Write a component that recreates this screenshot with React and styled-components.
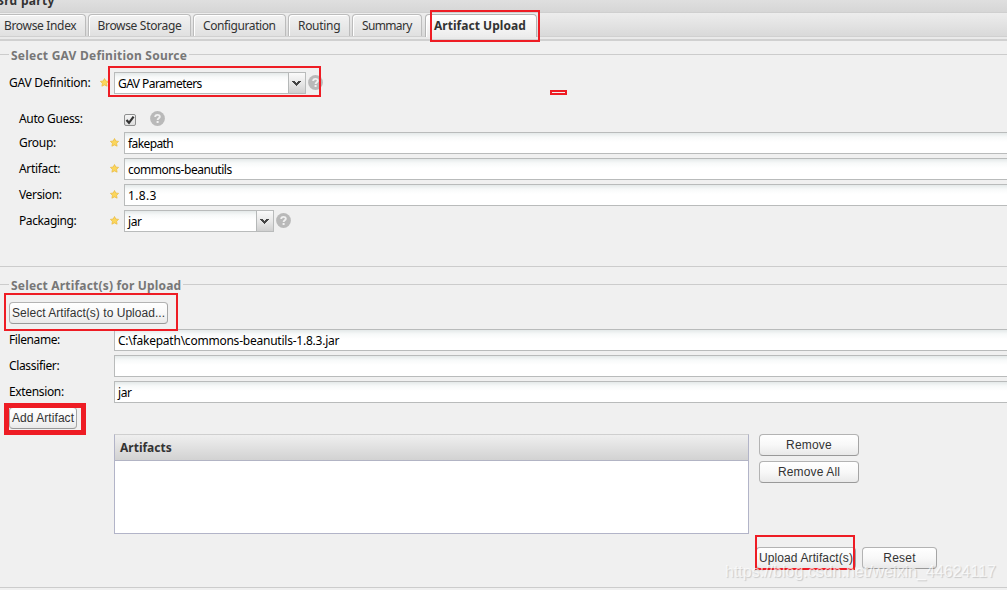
import styled, { createGlobalStyle } from 'styled-components'


const GlobalStyle = createGlobalStyle`
    * {
        box-sizing: border-box;
    }
    body {
        margin: 0;
        background: #f0f0f0;
        overflow: hidden;
    }
`

const Page = styled.div`
    position: relative;
    width: 1007px;
    height: 590px;
    overflow: hidden;
    background: #f0f0f0;
    font-family: "Noto Sans", "DejaVu Sans", sans-serif;
    font-size: 12px;
    color: #000;
    white-space: nowrap;
`

const Spaced = styled.span`
    letter-spacing: ${props => props.$ls || 0}px;
`

const TitleBar = styled.div`
    height: 13px;
    border-bottom: 1px solid #cfcfcf;
    background: linear-gradient(#dfdfdf, #d6d6d6);
    font-weight: bold;
    line-height: 14px;
    color: #333;
    overflow: hidden;
`
const TitleText = styled.div`
    margin: -6px 0 0 -3px;
`

const TabStrip = styled.div`
    display: flex;
    height: 24px;
    padding-top: 1px;
    border-bottom: 1px solid #d0d0d0;
    background: linear-gradient(#ededed, #d9d9d9);
`
const Tab = styled.div`
    flex: none;
    width: ${props => props.$w}px;
    height: ${props => props.$active ? 23 : 22}px;
    margin-left: ${props => props.$gap}px;
    padding-left: ${props => props.$pad}px;
    border: 1px solid ${props => props.$active ? '#b5b5b5' : '#bcbcbc'};
    border-bottom: 0;
    border-radius: 4px 4px 0 0;
    box-shadow: inset 1px 1px 0 #fff;
    background: ${props => props.$active
        ? 'linear-gradient(#ffffff, #ececec)'
        : 'linear-gradient(#f2f2f2, #e0e0e0)'};
    color: #333;
    font-weight: ${props => props.$active ? 'bold' : 'normal'};
    line-height: 22px;
`
const TabSpacer = styled.div`
    height: 4px;
    border-bottom: 2px solid #d0d0d0;
    background: #eaeaea;
`

const Section = styled.section`
    height: ${props => props.$h}px;
    padding-top: ${props => props.$pt}px;
    border-bottom: 1px solid #ccc;
`
const Legend = styled.div`
    display: flex;
    align-items: center;
    height: 16px;
    color: #777;
    font-weight: bold;
    &::before, &::after {
        content: '';
        height: 1px;
        background: #ccc;
        margin-top: -2px;
    }
    &::before {
        width: 9px;
        margin-right: 2px;
    }
    &::after {
        flex: 1;
        margin-left: 2px;
    }
`

const Row = styled.div`
    display: flex;
    height: 22px;
    margin-top: ${props => props.$top}px;
    padding-left: ${props => props.$indent}px;
`
const Label = styled.label`
    width: ${props => props.$w}px;
    flex: none;
    line-height: 21px;
`
const StarSlot = styled.span`
    width: 14px;
    flex: none;
    padding-top: 6px;
    line-height: 0;
`
const Field = styled.div`
    flex: 1;
    height: 22px;
    padding-left: 3px;
    border: 1px solid #b9bbbb;
    border-right: 0;
    background: linear-gradient(#e4e9e9, #f7f9f9 4px, #fff 9px);
    line-height: 21px;
`
const Combo = styled.div`
    display: flex;
    justify-content: space-between;
    width: ${props => props.$w}px;
    height: 22px;
    padding-left: 3px;
    border: 1px solid #b9bbbb;
    background: linear-gradient(#e4e9e9, #f7f9f9 4px, #fff 9px);
    line-height: 21px;
`
const Trigger = styled.span`
    display: flex;
    align-items: center;
    justify-content: center;
    width: 17px;
    padding-right: 1px;
    border-left: 1px solid #b5b8b8;
    background: linear-gradient(#fafafa, #e8e8e8 50%, #cfcfcf);
`
const Checkbox = styled.span`
    width: 12px;
    height: 12px;
    margin: 6px 15px 0 0;
    border: 1px solid #8e8f8f;
    border-radius: 2px;
    background: linear-gradient(#f5f5f5, #dedede);
    line-height: 0;
`
const HelpDot = styled.span`
    width: 15px;
    height: 15px;
    margin: ${props => props.$m};
    line-height: 0;
`

const Button = styled.button`
    display: flex;
    align-items: center;
    justify-content: center;
    flex: none;
    width: ${props => props.$w}px;
    height: 22px;
    margin: 0;
    padding: 0 0 1px;
    border: 1px solid #b3b3b3;
    border-bottom-color: #999;
    border-right-color: #a5a5a5;
    border-radius: 4px;
    background: linear-gradient(#ffffff, #f8f8f8 50%, #e9e9e9);
    color: #333;
    font: 12px "Liberation Sans", Arial, sans-serif;
    white-space: nowrap;
`
const ButtonRow = styled.div`
    display: flex;
    gap: 6px;
    margin-top: ${props => props.$top}px;
    padding-left: ${props => props.$indent}px;
`

const ListArea = styled.div`
    display: flex;
    gap: 10px;
    margin-top: 5px;
    padding-left: 114px;
`
const Grid = styled.div`
    width: 635px;
    height: 100px;
    border: 1px solid #b2b4c8;
    border-top-color: #cfcfcf;
    background: #fff;
`
const GridHeader = styled.div`
    height: 26px;
    padding-left: 5px;
    border-bottom: 1px solid #b2b4c4;
    background: linear-gradient(#efefef, #d2d2d2);
    color: #333;
    font-weight: bold;
    line-height: 25px;
`
const ButtonColumn = styled.div`
    display: flex;
    flex-direction: column;
    gap: 5px;
`

// red marker drawn over the form
const Marker = styled.div`
    position: absolute;
    left: ${props => props.$x}px;
    top: ${props => props.$y}px;
    width: ${props => props.$w}px;
    height: ${props => props.$h}px;
    border: ${props => props.$b || 2}px solid #ee1c24;
`
const Watermark = styled.div`
    position: absolute;
    left: 725px;
    top: 562px;
    color: rgba(255, 255, 255, 0.7);
    font: 16px/20px "Liberation Sans", Arial, sans-serif;
    text-shadow: 1px 1px 1px rgba(0, 0, 0, 0.16);
`

const Star = () => (
    <svg width="9" height="9" viewBox="0 0 9 9">
        <path d="M4.5 0.5L5.8 3L8.6 3.4L6.6 5.3L7.1 8.2L4.5 6.9L1.9 8.2L2.4 5.3L0.4 3.4L3.2 3Z" fill="#fbd65c" stroke="#e9b93c" strokeWidth="0.7" />
    </svg>
)

const Arrow = () => (
    <svg width="9" height="5" viewBox="0 0 9 5" shapeRendering="crispEdges">
        <path d="M0 0h3v1h1v1h1v-1h1v-1h3v1h-1v1h-1v1h-1v1h-1v1h-1v-1h-1v-1h-1v-1h-1v-1h-1z" fill="#444" />
    </svg>
)

const Help = ({ m }) => (
    <HelpDot $m={m}>
        <svg width="15" height="15" viewBox="0 0 15 15">
            <circle cx="7.5" cy="7.5" r="7.4" fill="#b9b9b9" />
            <path d="M5.2 6C5.2 3.2 9.8 3.2 9.8 5.8C9.8 7.3 7.6 7.2 7.6 9" fill="none" stroke="#f0f0f0" strokeWidth="1.9" />
            <rect x="6.6" y="10" width="2" height="2" fill="#f0f0f0" />
        </svg>
    </HelpDot>
)

const Check = () => (
    <svg width="10" height="10" viewBox="0 0 10 10">
        <path d="M1.5 5L4 7.8L8.6 1.6" fill="none" stroke="#333" strokeWidth="2.2" />
    </svg>
)

const tabs = [
    { text: 'Browse Index', w: 91, gap: -5, pad: 8, ls: -0.33 },
    { text: 'Browse Storage', w: 103, gap: 2, pad: 8.5, ls: -0.32 },
    { text: 'Configuration', w: 93, gap: 2, pad: 9, ls: -0.4 },
    { text: 'Routing', w: 62, gap: 2, pad: 9, ls: -0.3 },
    { text: 'Summary', w: 70, gap: 2, pad: 9, ls: -0.65 },
    { text: 'Artifact Upload', w: 112, gap: 3, pad: 8, ls: 0.03, active: true },
]

const gavFields = [
    { label: 'Group:', value: 'fakepath', top: 2, ls: -0.3, vls: -0.6 },
    { label: 'Artifact:', value: 'commons-beanutils', top: 4, ls: -0.33, vls: -0.47 },
    { label: 'Version:', value: '1.8.3', top: 4, ls: -0.35, vls: 0.35 },
]

const fileFields = [
    { label: 'Filename:', value: 'C:\\fakepath\\commons-beanutils-1.8.3.jar', top: 5, ls: -0.4, vls: -0.23 },
    { label: 'Classifier:', value: '', top: 4, ls: -0.35, vls: 0 },
    { label: 'Extension:', value: 'jar', top: 4, ls: -0.35, vls: -0.4 },
]

const App = () => {
    return (
        <Page>
            <GlobalStyle />
            <TitleBar>
                <TitleText><Spaced $ls={0.3}>3rd party</Spaced></TitleText>
            </TitleBar>
            <TabStrip>
                {tabs.map(tab => (
                    <Tab key={tab.text} $w={tab.w} $gap={tab.gap} $pad={tab.pad} $active={tab.active}>
                        <Spaced $ls={tab.ls}>{tab.text}</Spaced>
                    </Tab>
                ))}
            </TabStrip>
            <TabSpacer />

            <Section $h={226} $pt={6}>
                <Legend><Spaced $ls={0.23}>Select GAV Definition Source</Spaced></Legend>
                <Row $top={9} $indent={9}>
                    <Label $w={91}><Spaced $ls={-0.22}>GAV Definition:</Spaced></Label>
                    <StarSlot><Star /></StarSlot>
                    <Combo $w={192}>
                        <Spaced $ls={-0.55}>GAV Parameters</Spaced>
                        <Trigger><Arrow /></Trigger>
                    </Combo>
                    <Help m="3px 0 0 2px" />
                </Row>
                <Row $top={14} $indent={19}>
                    <Label $w={105}><Spaced $ls={-0.35}>Auto Guess:</Spaced></Label>
                    <Checkbox><Check /></Checkbox>
                    <Help m="3px 0 0 -1px" />
                </Row>
                {gavFields.map(field => (
                    <Row key={field.label} $top={field.top} $indent={19}>
                        <Label $w={91}><Spaced $ls={field.ls}>{field.label}</Spaced></Label>
                        <StarSlot><Star /></StarSlot>
                        <Field><Spaced $ls={field.vls}>{field.value}</Spaced></Field>
                    </Row>
                ))}
                <Row $top={4} $indent={19}>
                    <Label $w={91}><Spaced $ls={-0.4}>Packaging:</Spaced></Label>
                    <StarSlot><Star /></StarSlot>
                    <Combo $w={150}>
                        <Spaced $ls={-0.4}>jar</Spaced>
                        <Trigger><Arrow /></Trigger>
                    </Combo>
                    <Help m="3px 0 0 2px" />
                </Row>
            </Section>

            <Section $h={321} $pt={10}>
                <Legend><Spaced $ls={0.18}>Select Artifact(s) for Upload</Spaced></Legend>
                <ButtonRow $top={9} $indent={9}>
                    <Button $w={159}><Spaced $ls={0.03}>Select Artifact(s) to Upload...</Spaced></Button>
                </ButtonRow>
                {fileFields.map(field => (
                    <Row key={field.label} $top={field.top} $indent={9}>
                        <Label $w={105}><Spaced $ls={field.ls}>{field.label}</Spaced></Label>
                        <Field><Spaced $ls={field.vls}>{field.value}</Spaced></Field>
                    </Row>
                ))}
                <ButtonRow $top={4} $indent={9}>
                    <Button $w={68}><Spaced $ls={0.07}>Add Artifact</Spaced></Button>
                </ButtonRow>
                <ListArea>
                    <Grid>
                        <GridHeader><Spaced>Artifacts</Spaced></GridHeader>
                    </Grid>
                    <ButtonColumn>
                        <Button $w={100}><Spaced $ls={0.2}>Remove</Spaced></Button>
                        <Button $w={100}><Spaced $ls={0.15}>Remove All</Spaced></Button>
                    </ButtonColumn>
                </ListArea>
                <ButtonRow $top={13} $indent={756}>
                    <Button $w={100}><Spaced $ls={0.12}>Upload Artifact(s)</Spaced></Button>
                    <Button $w={75}><Spaced $ls={0.2}>Reset</Spaced></Button>
                </ButtonRow>
            </Section>

            <Marker $x={430} $y={10} $w={110} $h={32} />
            <Marker $x={108} $y={66} $w={213} $h={31} />
            <Marker $x={550} $y={90} $w={17} $h={5} />
            <Marker $x={4} $y={293} $w={174} $h={38} />
            <Marker $x={4} $y={403} $w={82} $h={32} $b={5} />
            <Marker $x={755} $y={535} $w={100} $h={35} />
            <Watermark>https://blog.csdn.net/weixin_44624117</Watermark>
        </Page>
    )
}

export default App
